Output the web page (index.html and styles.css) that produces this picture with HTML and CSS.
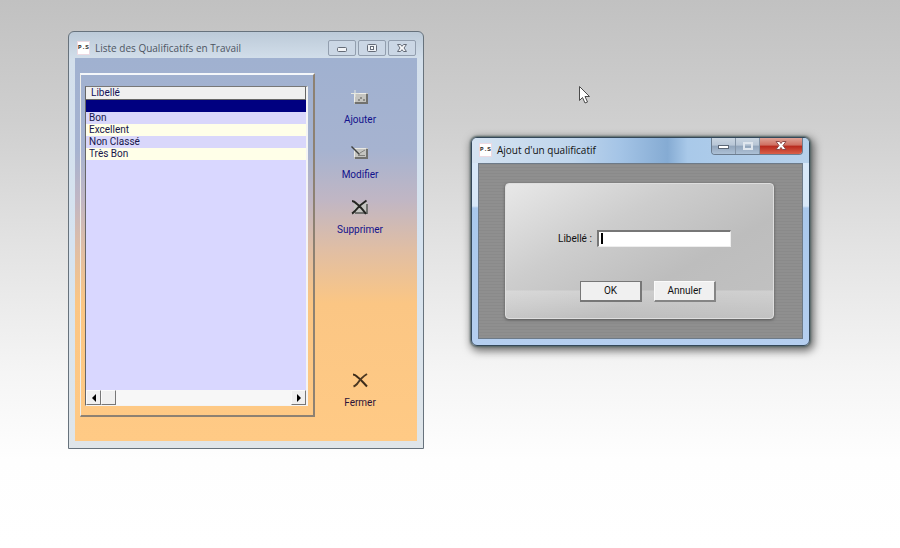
FILE: index.html
```html
<!DOCTYPE html>
<html lang="fr">
<head>
  <meta charset="UTF-8" />
  <meta name="viewport" content="width=device-width, initial-scale=1.0" />
  <title>Liste des Qualificatifs en Travail</title>
  <link rel="stylesheet" href="styles.css">
</head>
<body>
  <main class="desktop">
    <section class="window list-window">
      <header class="titlebar">
        <span class="app-icon">P.S</span>
        <h1>Liste des Qualificatifs en Travail</h1>
        <div class="caption-buttons">
          <button type="button" aria-label="Réduire">
            <svg width="14" height="12" viewBox="0 0 14 12"><rect x="2.5" y="5.5" width="9" height="4" rx="1" fill="#f2f4f7" stroke="#646b77"/></svg>
          </button>
          <button type="button" aria-label="Agrandir">
            <svg width="14" height="12" viewBox="0 0 14 12"><rect x="2.5" y="2.5" width="9" height="7" rx="1" fill="#eef1f5" stroke="#646b77"/><rect x="5.5" y="4.5" width="3" height="3" fill="#fff" stroke="#646b77"/></svg>
          </button>
          <button type="button" aria-label="Fermer la fenêtre">
            <svg width="14" height="12" viewBox="0 0 14 12"><path d="M2.5 2.5h3L7 4.300l1.500-1.800h3L9 6l2.500 3.500h-3L7 7.700 5.500 9.500h-3L5 6z" fill="#f7f8fa" stroke="#646b77"/></svg>
          </button>
        </div>
      </header>

      <div class="list-body">
        <div class="group">
          <div class="listbox">
            <table>
              <thead>
                <tr><th>Libellé</th></tr>
              </thead>
              <tbody>
                <tr class="selected"><td></td></tr>
                <tr><td>Bon</td></tr>
                <tr><td>Excellent</td></tr>
                <tr><td>Non Classé</td></tr>
                <tr><td>Très Bon</td></tr>
              </tbody>
            </table>
            <div class="scrollbar">
              <button type="button" aria-label="Défiler à gauche"><svg width="6" height="8" viewBox="0 0 6 8"><path d="M5 0v8L1 4z"/></svg></button>
              <span class="thumb"></span>
              <button type="button" class="right" aria-label="Défiler à droite"><svg width="6" height="8" viewBox="0 0 6 8"><path d="M1 0v8l4-4z"/></svg></button>
            </div>
          </div>
        </div>

        <nav class="actions">
          <button type="button">
            <svg width="20" height="20" viewBox="0 0 20 20">
              <path d="M4 5h14v11H4z" fill="#c4c4c0"/>
              <path d="M5 15h12V6" fill="none" stroke="#71716e" stroke-width="2"/>
              <path d="M4.500 14V5.500H16" fill="none" stroke="#efefe9"/>
              <path d="M1 5.500h8M5 2v7" stroke="#e6e8e0"/>
              <path d="M8 12h2M13 12h2M10 10h2" stroke="#565653"/>
            </svg>
            <span>Ajouter</span>
          </button>
          <button type="button">
            <svg width="20" height="20" viewBox="0 0 20 20">
              <path d="M4 5h14v11H4z" fill="#c4c4c0"/>
              <path d="M5 15h12V6" fill="none" stroke="#71716e" stroke-width="2"/>
              <path d="M4.500 14V5.500H16" fill="none" stroke="#e9e9e3"/>
              <path d="M1.500 3.500l8 8" stroke="#3f4140" stroke-width="1.500"/>
              <path d="M8 12.500h7M10 10l5-3" stroke="#83837f"/>
            </svg>
            <span>Modifier</span>
          </button>
          <button type="button">
            <svg width="20" height="20" viewBox="0 0 20 20">
              <path d="M4 5h14v11H4z" fill="#c4c4c0"/>
              <path d="M5 15h12V6" fill="none" stroke="#71716e" stroke-width="2"/>
              <path d="M2 3c2 0 3 1 5 3 4 3 6 6 9 10M16.500 2.500C11 6 8 9 5 13c-1 1-2 2-3 2.500" fill="none" stroke="#252622" stroke-width="2"/>
            </svg>
            <span>Supprimer</span>
          </button>
          <button type="button" class="close">
            <svg width="20" height="20" viewBox="0 0 20 20">
              <path d="M3 3.500c2 0 3 1 4.500 2.500 4 3 6 6 9.500 9.500" fill="none" stroke="#3d2c1a" stroke-width="2"/>
              <path d="M17 3c-5 3-8 7-10 10-1 1-2 2-3.500 2.500" fill="none" stroke="#4c3822" stroke-width="2"/>
            </svg>
            <span>Fermer</span>
          </button>
        </nav>
      </div>
    </section>

    <section class="window dialog">
      <header class="titlebar">
        <span class="app-icon">P.S</span>
        <h1>Ajout d'un qualificatif</h1>
        <div class="caption-buttons">
          <button type="button" aria-label="Réduire">
            <svg width="14" height="12" viewBox="0 0 14 12"><rect x="1.500" y="5.500" width="10" height="3" fill="#fff" stroke="#5b6675"/></svg>
          </button>
          <button type="button" aria-label="Agrandir" disabled>
            <svg width="14" height="12" viewBox="0 0 14 12"><rect x="3" y="3" width="8" height="6" fill="none" stroke="#dfe6ee" stroke-width="2"/></svg>
          </button>
          <button type="button" class="quit" aria-label="Fermer la fenêtre">
            <svg width="14" height="12" viewBox="0 0 14 12"><path d="M2 1.500h3.500L7 3.500l1.500-2H12L9 5.500l3 4H8.500L7 7.500l-1.500 2H2l3-4z" fill="#fff" stroke="#8d4a48"/></svg>
          </button>
        </div>
      </header>

      <div class="dialog-body">
        <form class="panel">
          <div class="field">
            <label for="libelle">Libellé :</label>
            <input type="text" id="libelle" name="libelle" />
          </div>
          <div class="buttons">
            <button type="submit" class="default">OK</button>
            <button type="button">Annuler</button>
          </div>
        </form>
      </div>
    </section>

    <svg class="cursor" width="14" height="20" viewBox="0 0 14 20">
      <path d="M1.500 1.500v14l3-3 2.500 5.500 2.500-1-2.500-5.500h4.500z" fill="#fff" stroke="#4a4a4a"/>
    </svg>
  </main>
</body>
</html>
```
FILE: styles.css
```css
* {
  box-sizing: border-box;
}
body {
  margin: 0;
  font-family: Roboto, 'Liberation Sans', sans-serif;
  font-size: 10px;
  line-height: 12px;
  color: #111;
}
button, input {
  font: inherit;
  color: inherit;
}
svg {
  display: block;
}
.desktop {
  position: relative;
  min-height: 100vh;
  overflow: hidden;
  background: linear-gradient(#c1c1c1, #cfcfcf 22%, #e3e3e3 45%, #f5f5f5 68%, #fefefe 84%, #fff);
}

/* windows */
.window {
  position: absolute;
  display: flex;
  flex-direction: column;
}
.titlebar {
  display: flex;
  align-items: center;
  font-family: 'Open Sans', sans-serif;
}
.titlebar h1 {
  flex: 1;
  margin: 0;
  font-size: 10px;
  font-weight: normal;
  line-height: 16px;
  white-space: nowrap;
}
.app-icon {
  width: 13px;
  height: 14px;
  margin-right: 5px;
  background: #fff;
  border: 1px solid #ecd9e2;
  color: #222;
  font-family: 'Liberation Mono', monospace;
  font-size: 6px;
  font-weight: bold;
  line-height: 11px;
  text-align: center;
}
.caption-buttons {
  display: flex;
}
.caption-buttons button {
  display: flex;
  align-items: center;
  justify-content: center;
  padding: 0;
}

/* list of labels */
.list-window {
  left: 68px;
  top: 31px;
  width: 356px;
  height: 418px;
  padding: 0 6px 7px;
  border: 1px solid #67727c;
  border-radius: 6px 6px 0 0;
  background: linear-gradient(#bccad8, #d3dfeb 28px, #d6e3f0 50%, #dfe5e9);
}
.list-window .titlebar {
  height: 26px;
  padding: 5px 1px 0 2px;
  color: #4d5562;
}
.list-window .caption-buttons {
  gap: 2px;
}
.list-window .caption-buttons button {
  width: 28px;
  height: 16px;
  border: 1px solid #929eae;
  border-radius: 2px;
  background: #cbd7e5;
}
.list-body {
  flex: 1;
  display: flex;
  padding: 15px 5px 24px;
  background: linear-gradient(#a0b1d0, #a6b3d0 24%, #c0b6c4 37%, #e0bea4 50%, #fbc684 64%, #ffca85);
}
.group {
  width: 235px;
  padding: 11px 5px 9px 4px;
  border: 1px solid #8d8172;
  border-right-width: 2px;
  border-bottom-width: 2px;
  border-top: 2px solid #f4f7fa;
  border-left: 1px solid #eeeeea;
}
.listbox {
  height: 100%;
  display: flex;
  flex-direction: column;
  border: 1px solid #f4f4f4;
  border-top-color: #777;
  border-left-color: #666;
  border-right-width: 2px;
  background: #d9d7ff;
}
.listbox table {
  width: 100%;
  border-collapse: separate;
  border-spacing: 0;
}
.listbox th, .listbox td {
  height: 12px;
  padding: 0 3px;
  font-weight: normal;
  line-height: 12px;
  text-align: left;
}
.listbox th {
  padding-left: 5px;
  background: #f0f0f0;
  border-right: 1px solid #666;
  border-bottom: 1px solid #666;
  color: #11115a;
}
.listbox td {
  color: #16164a;
}
.listbox tbody tr:nth-child(odd) {
  background: #ffffe8;
}
.listbox tbody tr:nth-child(even) {
  background: #d9d7fb;
}
.listbox tbody tr.selected {
  background: #000080;
}
.scrollbar {
  display: flex;
  height: 15px;
  margin-top: auto;
  background: #f7f7f7;
}
.scrollbar button, .thumb {
  display: flex;
  align-items: center;
  justify-content: center;
  width: 15px;
  padding: 0;
  border: 1px solid #fafafa;
  border-right-color: #777;
  border-bottom-color: #777;
  background: #f0f0f0;
}
.scrollbar .right {
  margin-left: auto;
}
.actions {
  flex: 1;
  display: flex;
  flex-direction: column;
  align-items: center;
  gap: 17px;
  padding: 15px 7px 0 0;
}
.actions button {
  display: flex;
  flex-direction: column;
  align-items: center;
  gap: 6px;
  padding: 0;
  border: 0;
  background: none;
  color: #12128c;
}
.actions .close {
  margin-top: auto;
  margin-bottom: 8px;
  color: #2c1238;
}

/* add dialog */
.dialog {
  left: 471px;
  top: 137px;
  width: 339px;
  height: 209px;
  padding: 0 6px 6px;
  border: 1px solid #34485a;
  border-radius: 6px;
  background: linear-gradient(#d8e8f8, #d8e8f8 68px, #a9c8ec 70px, #b5cff0);
  box-shadow: 0 0 2px 1px #566, 2px 3px 8px 2px rgba(0, 0, 0, 0.55);
}
.dialog .titlebar {
  height: 25px;
  margin: 0 -6px;
  padding: 0 6px 2px 7px;
  border-radius: 5px 5px 0 0;
  background: linear-gradient(90deg, #d5e3f1, #bfd5ec 30%, #a4c4e6 44%, #85abd3 58%, #a9c9e9 64%, #b7d1eb);
}
.dialog .caption-buttons {
  align-self: flex-start;
  border: 1px solid #6c7d90;
  border-top: 0;
  border-radius: 0 0 4px 4px;
  overflow: hidden;
}
.dialog .caption-buttons button {
  width: 24px;
  height: 16px;
  border: 0;
  border-right: 1px solid #8494a6;
  background: linear-gradient(#c9d5e1, #b8c6d6 45%, #92a5bb 50%, #adc1d6);
}
.dialog .caption-buttons .quit {
  width: 42px;
  border-right: 0;
  background: linear-gradient(#dfa397, #cf6e60 45%, #b7281c 50%, #d9604a);
}
.dialog-body {
  flex: 1;
  display: flex;
  padding: 19px 28px 19px 26px;
  border: 1px solid #6d7a88;
  background: repeating-linear-gradient(#8a8a8a 0 1px, #8f8f8f 1px 3px);
}
.panel {
  flex: 1;
  padding: 46px 0 0 52px;
  border: 1px solid #dedede;
  border-radius: 4px;
  background:
    linear-gradient(transparent 106px, rgba(255, 255, 255, 0.25) 107px, transparent),
    linear-gradient(150deg, #e8e8e8, #cdcdcd 35%, #bdbdbd 65%, #c2c2c2);
  box-shadow: 0 1px 3px #555;
}
.field {
  display: flex;
  align-items: center;
  gap: 5px;
}
.field label {
  width: 34px;
  white-space: nowrap;
}
.field input {
  width: 134px;
  height: 17px;
  padding: 0 3px;
  border: 1px solid #eee;
  border-top: 2px solid #777;
  border-left: 2px solid #777;
  /* text caret */
  background: linear-gradient(#000, #000) 2px 1px / 2px 11px no-repeat #fff;
  outline: 0;
}
.buttons {
  display: flex;
  gap: 12px;
  margin: 34px 0 0 22px;
}
.buttons button {
  width: 62px;
  height: 21px;
  padding: 0;
  border: 1px solid #fafafa;
  border-right: 2px solid #858585;
  border-bottom: 2px solid #858585;
  background: #f0f0f0;
}
.buttons .default {
  border-color: #777;
}

.cursor {
  position: absolute;
  left: 578px;
  top: 85px;
}
```
